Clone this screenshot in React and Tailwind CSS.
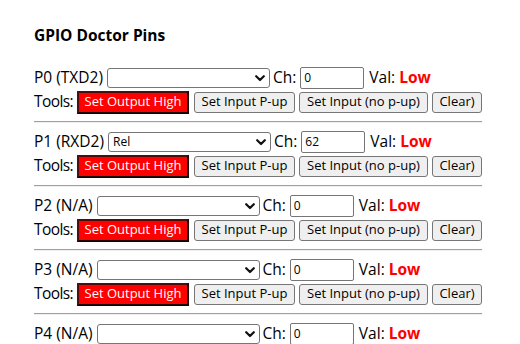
import React from 'react';

const pins = [
  { label: 'P0 (TXD2)', sel: '', ch: '0' },
  { label: 'P1 (RXD2)', sel: 'Rel', ch: '62' },
  { label: 'P2 (N/A)', sel: '', ch: '0' },
  { label: 'P3 (N/A)', sel: '', ch: '0' },
  { label: 'P4 (N/A)', sel: '', ch: '0' },
];

const Chevron = () => (
  <svg width="10" height="7" viewBox="0 0 10 7" className="shrink-0">
    <polyline points="1.2,1.2 5,5 8.8,1.2" fill="none" stroke="#111" strokeWidth="2.2" strokeLinecap="round" strokeLinejoin="round" />
  </svg>
);

const GrayButton = ({ children, width }) => (
  <div
    className={`${width} h-[21px] flex items-center justify-center rounded-[3px] border border-[#767676] bg-[#efefef] text-[13px] text-black whitespace-nowrap`}
  >
    {children}
  </div>
);

const PinBlock = ({ pin }) => (
  <div>
    {/* first line: mode select, channel, value */}
    <div className="flex items-center h-[24px] text-[15.5px]">
      <span className="whitespace-nowrap">{pin.label}</span>
      <div className="ml-[4px] w-[163px] h-[20px] flex items-center justify-between rounded-[3px] border border-[#767676] bg-white pl-[4px] pr-[4px]">
        <span className="text-[12px]">{pin.sel}</span>
        <Chevron />
      </div>
      <span className="ml-[3px]">Ch:</span>
      <div className="ml-[4px] w-[64px] h-[22px] flex items-center rounded-[2px] border border-[#767676] bg-white px-[3px] text-[12px]">
        {pin.ch}
      </div>
      <span className="ml-[5px]">Val:</span>
      <span className="ml-[4px] font-bold text-[#ff0000]">Low</span>
    </div>
    {/* second line: tools */}
    <div className="flex items-center h-[24px] text-[15.5px]">
      <span className="w-[43px] whitespace-nowrap tracking-[-0.6px]">Tools:</span>
      <div className="w-[112px] h-[23px] flex items-center justify-center border-2 border-t-[#4a1010] border-l-[#4a1010] border-b-[#1a0000] border-r-[#1a0000] bg-[#ff0000] text-[13px] text-white whitespace-nowrap">
        Set Output High
      </div>
      <div className="ml-[5px] flex gap-[4px]">
        <GrayButton width="w-[101px]">Set Input P-up</GrayButton>
        <GrayButton width="w-[129px]">Set Input (no p-up)</GrayButton>
        <GrayButton width="w-[50px]">Clear)</GrayButton>
      </div>
    </div>
  </div>
);

export default function App() {
  return (
    <div className="h-[344px] overflow-hidden bg-white px-[34px] pt-[25px] font-['Open_Sans',sans-serif] text-black">
      <h3 className="text-[15.5px] font-bold leading-5">GPIO Doctor Pins</h3>
      <div className="mt-[21px] w-[448px]">
        {pins.map((pin, i) => (
          <div key={pin.label}>
            {i > 0 && <div className="my-[7px] h-[2px] border-t border-t-[#a0a0a0] border-b border-b-[#eeeeee]" />}
            <PinBlock pin={pin} />
          </div>
        ))}
      </div>
    </div>
  );
}
